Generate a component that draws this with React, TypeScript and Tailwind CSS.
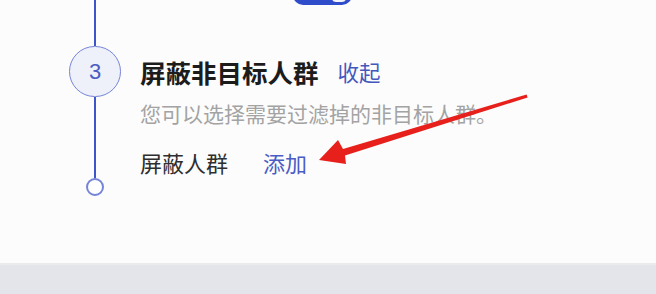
import React from "react";

export default function App() {
  return (
    <div
      className="relative w-[656px] h-[294px] overflow-hidden bg-[#fcfcfc] flex flex-col"
      style={{ fontFamily: '"Noto Sans CJK SC", "Noto Sans", sans-serif' }}
    >
      {/* partially visible button at top */}
      <div className="absolute left-[293px] top-[-20px] w-[59px] h-[25px] rounded-[10px] bg-[#2f4dcb]">
        <div className="absolute right-[6px] top-[14px] w-[14px] h-[8px] rounded-full bg-[#f2f4fb]" />
      </div>

      <div className="flex h-[263px] pl-[69px]">
        {/* timeline */}
        <div className="w-[52px] flex flex-col items-center">
          <div className="w-[2px] h-[46px] bg-[#3c55c9]" />
          <div
            className="w-[52px] h-[51px] rounded-full border-[1.5px] border-[#7584d8] bg-[#eef0fa] flex items-center justify-center text-[22px] text-[#4b5cc0]"
            style={{ fontFamily: '"Liberation Sans", Arial, sans-serif' }}
          >
            3
          </div>
          <div className="w-[2px] h-[81px] bg-[#3c55c9]" />
          <div className="w-[18px] h-[18px] rounded-full border-[2px] border-[#7584d8] bg-white" />
        </div>

        {/* content */}
        <div className="ml-[19px] pt-[46px] flex flex-col">
          <div className="h-[51px] flex items-center">
            <span className="text-[25.5px] font-bold text-[#1c1c1c] leading-none">屏蔽非目标人群</span>
            <span className="ml-[19px] text-[21.5px] text-[#4457bd] leading-none">收起</span>
          </div>
          <div className="mt-[1px] text-[21px] leading-[30px] text-[#a3a3a3]">
            您可以选择需要过滤掉的非目标人群。
          </div>
          <div className="mt-[19px] flex items-center leading-[30px]">
            <span className="text-[22px] text-[#2e2e2e]">屏蔽人群</span>
            <span className="ml-[35px] text-[22px] text-[#4a5cc6]">添加</span>
          </div>
        </div>
      </div>

      {/* bottom band */}
      <div className="flex-1 border-t-[2px] border-[#ebebeb] bg-[#e3e5ea]" />

      {/* red annotation arrow */}
      <svg className="absolute left-0 top-0 pointer-events-none" width="656" height="294">
        <polygon
          points="319,160 346,164 345,155.5 527.6,97.4 526.6,94.6 343,149 338,140"
          fill="#e8201b"
        />
      </svg>
    </div>
  );
}
